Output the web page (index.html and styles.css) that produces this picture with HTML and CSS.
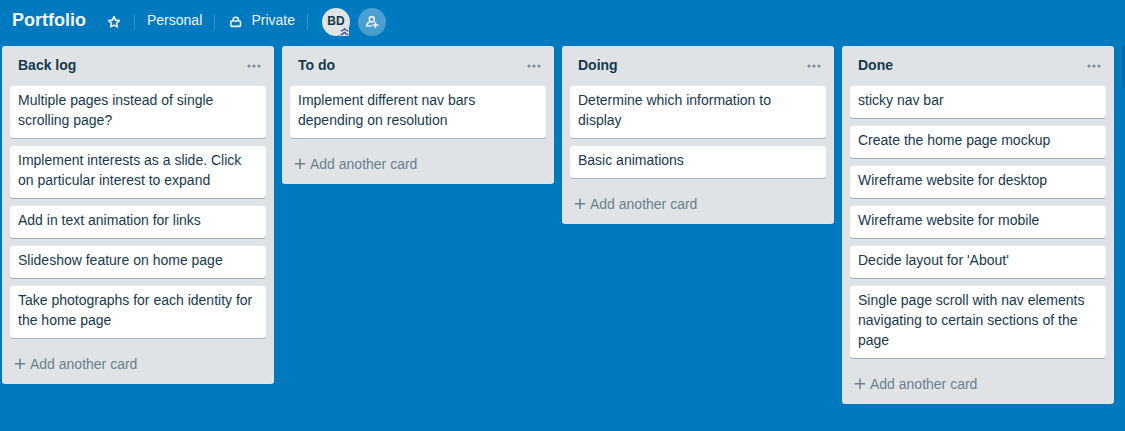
FILE: index.html
```html
<!DOCTYPE html>
<html lang="en">
<head>
<meta charset="utf-8">
<title>Portfolio</title>
<link rel="stylesheet" href="styles.css">
</head>
<body>
<svg class="defs" width="0" height="0" aria-hidden="true">
  <symbol id="dots" viewBox="0 0 14 4"><circle cx="2" cy="2" r="1.6"/><circle cx="7" cy="2" r="1.6"/><circle cx="12" cy="2" r="1.6"/></symbol>
  <symbol id="plus" viewBox="0 0 12 12"><path d="M6 .7v10.2M.9 5.7h10.2" fill="none" stroke="currentColor" stroke-width="1.5"/></symbol>
</svg>
<header class="board-header">
  <h1 class="board-title">Portfolio</h1>
  <svg class="star" width="14" height="14" viewBox="0 0 14 14"><path d="M7 1.7 8.6 5.1 12.4 5.6 9.6 8.2 10.3 11.9 7 10.1 3.7 11.9 4.4 8.2 1.6 5.6 5.4 5.1Z"/></svg>
  <span class="divider"></span>
  <span class="label">Personal</span>
  <span class="divider"></span>
  <span class="visibility">
    <svg class="lock" width="12" height="12" viewBox="0 0 12 12"><path d="M3 5V4a2.7 2.7 0 0 1 5.4 0v1"/><rect x=".9" y="5" width="9.6" height="5.4" rx=".8"/></svg>
    <span class="label">Private</span>
  </span>
  <span class="divider"></span>
  <span class="avatar">BD
    <svg class="badge" width="9" height="9" viewBox="0 0 9 9"><path d="M.7 4.1Q3.2 3.5 4.5 1.6 5.8 3.5 8.3 4.1M.7 7.9Q3.2 7.3 4.5 5.2 5.8 7.3 8.3 7.9"/></svg>
  </span>
  <span class="invite">
    <svg width="14" height="14" viewBox="0 0 14 14"><path d="M9.3 4.3a2.5 2.7 0 0 1-5 0 2.5 2.7 0 0 1 5 0ZM5.4 6.5C3 7.4 1.7 8.7 1.7 11H6.7M7.9 6.6 8.4 7.3M10.4 7v6M7.4 10h6"/></svg>
  </span>
</header>
<main class="board">
  <section class="list">
    <div class="list-header"><h2>Back log</h2><svg class="menu"><use href="#dots"/></svg></div>
    <div class="cards">
      <div class="card">Multiple pages instead of single scrolling page?</div>
      <div class="card">Implement interests as a slide. Click on particular interest to expand</div>
      <div class="card">Add in text animation for links</div>
      <div class="card">Slideshow feature on home page</div>
      <div class="card">Take photographs for each identity for the home page</div>
    </div>
    <div class="add-card"><svg class="plus"><use href="#plus"/></svg>Add another card</div>
  </section>
  <section class="list">
    <div class="list-header"><h2>To do</h2><svg class="menu"><use href="#dots"/></svg></div>
    <div class="cards">
      <div class="card">Implement different nav bars depending on resolution</div>
    </div>
    <div class="add-card"><svg class="plus"><use href="#plus"/></svg>Add another card</div>
  </section>
  <section class="list">
    <div class="list-header"><h2>Doing</h2><svg class="menu"><use href="#dots"/></svg></div>
    <div class="cards">
      <div class="card">Determine which information to display</div>
      <div class="card">Basic animations</div>
    </div>
    <div class="add-card"><svg class="plus"><use href="#plus"/></svg>Add another card</div>
  </section>
  <section class="list">
    <div class="list-header"><h2>Done</h2><svg class="menu"><use href="#dots"/></svg></div>
    <div class="cards">
      <div class="card">sticky nav bar</div>
      <div class="card">Create the home page mockup</div>
      <div class="card">Wireframe website for desktop</div>
      <div class="card">Wireframe website for mobile</div>
      <div class="card">Decide layout for 'About'</div>
      <div class="card">Single page scroll with nav elements navigating to certain sections of the page</div>
    </div>
    <div class="add-card"><svg class="plus"><use href="#plus"/></svg>Add another card</div>
  </section>
  <div class="add-list"></div>
</main>
</body>
</html>
```
FILE: styles.css
```css
* { box-sizing: border-box; }
body {
  margin: 0;
  height: 431px;
  overflow: hidden;
  background: #0079bf;
  color: #17394d;
  font: 14px/20px "Liberation Sans", Arial, sans-serif;
}
h1, h2 { margin: 0; }
.defs { display: block; }
.board-header {
  display: flex;
  align-items: center;
  height: 46px;
  padding: 0 0 3px 12px;
  color: #f0f5f8;
}
.board-title {
  width: 74px;
  margin-right: 21px;
  padding-bottom: 3px;
  font-size: 18px;
  line-height: 24px;
  white-space: nowrap;
}
.star, .lock, .invite svg, .badge {
  fill: none;
  stroke: #eef4f8;
  stroke-width: 1.6;
  stroke-linejoin: round;
}
.divider { width: 1px; height: 16px; background: #3393cb; }
.star { margin-right: 13px; }
.label { padding-bottom: 3px; }
.board-header > .label { width: 55px; margin: 0 12px; }
.visibility { display: flex; align-items: center; width: 80px; margin: 0 12px 0 0; padding-left: 15px; }
.visibility .label { margin-left: 9.4px; }
.avatar, .invite {
  position: relative;
  display: flex;
  align-items: center;
  justify-content: center;
  width: 28px;
  height: 28px;
  border-radius: 50%;
}
.avatar {
  margin-left: 14px;
  padding-bottom: 2px;
  background: #dfe3e6;
  color: #17394d;
  font-size: 12px;
  font-weight: bold;
}
.badge {
  position: absolute;
  right: 1px;
  bottom: 0;
  background: #dfe3e6;
  stroke: #4b45a1;
  stroke-width: 1.3;
}
.invite { margin-left: 8px; background: #4a9fd2; }
.board { display: flex; align-items: flex-start; gap: 8px; padding-left: 2px; }
.list {
  flex: 0 0 272px;
  background: #dfe3e6;
  border-radius: 3px;
}
.list-header {
  display: flex;
  justify-content: space-between;
  height: 40px;
  padding: 9px 13px 0 16px;
}
.list-header h2 { font-size: 14px; line-height: 20px; }
.menu { width: 14px; height: 4px; margin-top: 9px; fill: #798d99; }
.cards { display: flex; flex-direction: column; gap: 8px; padding: 0 8px; }
.card {
  padding: 4px 8px 8px;
  background: #fff;
  border-radius: 3px;
  box-shadow: 0 1px 0 #a5b3bf;
}
.add-card {
  display: flex;
  align-items: center;
  gap: 4px;
  height: 46px;
  padding: 5px 12px 0;
  color: #6b808c;
}
.plus { width: 12px; height: 12px; }
.add-list { flex: 1 1 0; height: 42px; border-radius: 3px 0 0 3px; background: #0069a8; }
```
